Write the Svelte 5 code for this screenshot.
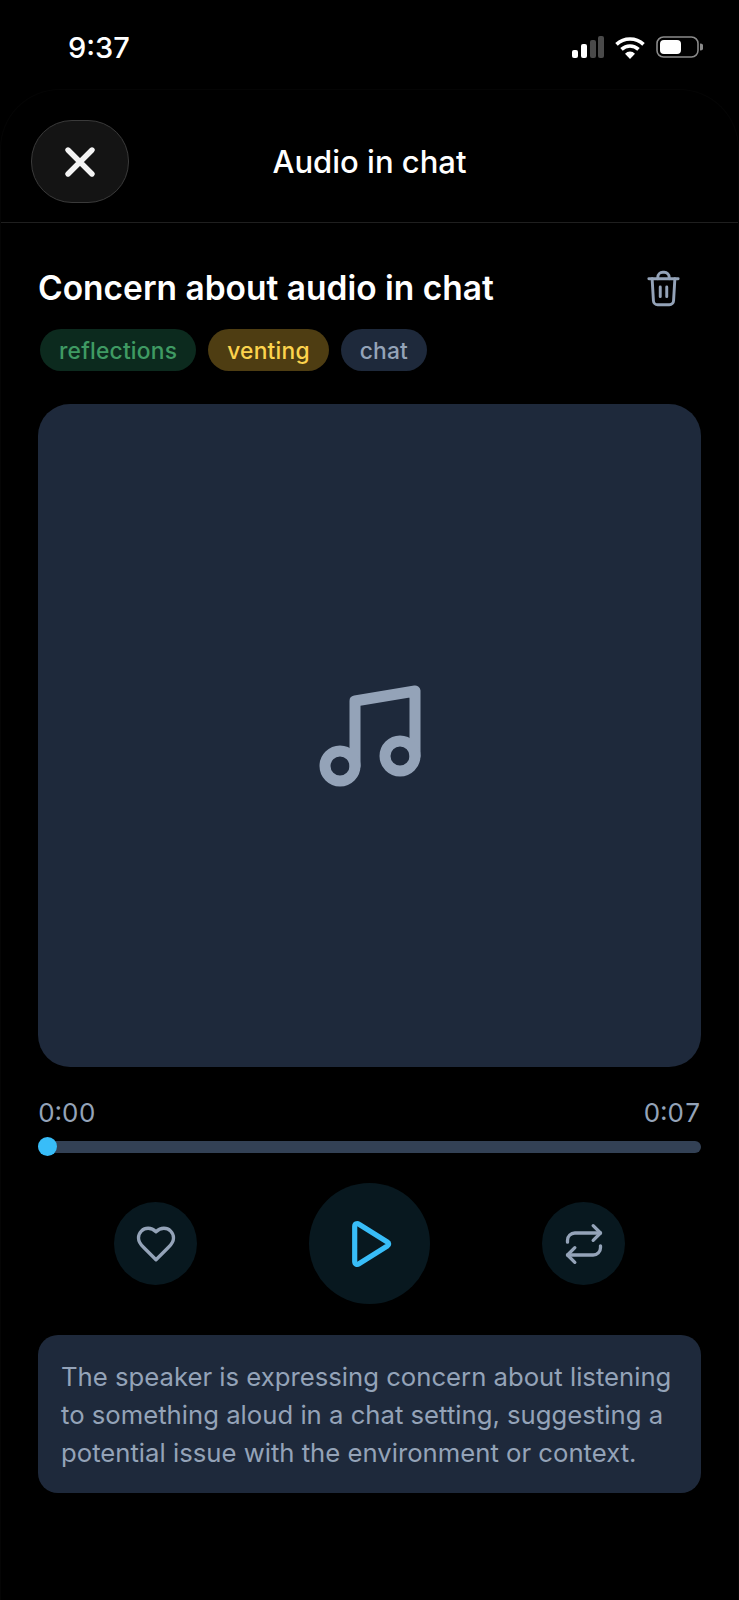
<script lang="ts">
  const tags = [
    { label: 'reflections', tone: 'green' },
    { label: 'venting', tone: 'yellow' },
    { label: 'chat', tone: 'slate' }
  ];
  const summary =
    'The speaker is expressing concern about listening to something aloud in a chat setting, suggesting a potential issue with the environment or context.';
</script>

<div class="screen">
  <div class="status">
    <span class="clock">9:37</span>
    <div class="status-icons">
      <svg width="32" height="22" viewBox="0 0 32 22" aria-hidden="true">
        <rect x="0" y="14" width="6" height="8" rx="2" fill="#fff" />
        <rect x="9" y="8" width="6" height="14" rx="2" fill="#fff" />
        <rect x="18" y="4" width="6" height="18" rx="2" fill="#4a4a4a" />
        <rect x="26" y="0" width="6" height="22" rx="2" fill="#4a4a4a" />
      </svg>
      <svg width="30" height="23" viewBox="0 0 30 23" aria-hidden="true" fill="none" stroke="#fff" stroke-width="3.6">
        <path d="M1.5 8.4a19.5 19.5 0 0 1 27 0" />
        <path d="M6.5 13.4a12.5 12.5 0 0 1 17 0" />
        <path d="M15 23l-5-5.300a7 7 0 0 1 10 0Z" fill="#fff" stroke="none" />
      </svg>
      <svg width="47" height="22" viewBox="0 0 47 22" aria-hidden="true">
        <rect x="1" y="1" width="41" height="20" rx="6.500" fill="none" stroke="#8a8a8a" stroke-width="1.600" />
        <rect x="4" y="4" width="21" height="14" rx="4" fill="#fff" />
        <path d="M44 7.500a3.500 3.500 0 0 1 0 7Z" fill="#8a8a8a" />
      </svg>
    </div>
  </div>

  <div class="sheet">
    <header class="topbar">
      <button class="close" aria-label="Close">
        <svg width="36" height="36" viewBox="0 0 36 36" fill="none" stroke="#f4f4f4" stroke-width="5.400" stroke-linecap="round">
          <path d="M6 6l24 24M30 6 6 30" />
        </svg>
      </button>
      <h1 class="topbar-title">Audio in chat</h1>
    </header>

    <main class="content">
      <div class="title-row">
        <h2 class="title">Concern about audio in chat</h2>
        <button class="trash" aria-label="Delete">
          <svg width="39" height="39" viewBox="0 0 24 24" fill="none" stroke="#94a3b8" stroke-width="1.800" stroke-linecap="round" stroke-linejoin="round">
            <path d="M3 6h18" />
            <path d="M19 6l-.8 13.500a2.600 2.600 0 0 1-2.600 2.500H8.400a2.600 2.600 0 0 1-2.600-2.500L5 6" />
            <path d="M8.500 6V5a3 3 0 0 1 3-3h1a3 3 0 0 1 3 3v1" />
            <path d="M10 11v6M14 11v6" />
          </svg>
        </button>
      </div>

      <div class="tags">
        {#each tags as tag}
          <span class="tag {tag.tone}">{tag.label}</span>
        {/each}
      </div>

      <div class="art">
        <svg width="120" height="120" viewBox="0 0 24 24" fill="none" stroke="#94a3b8" stroke-width="2.200" stroke-linecap="round" stroke-linejoin="round">
          <path d="M9 18V5l12-2v13" />
          <circle cx="6" cy="18" r="3" />
          <circle cx="18" cy="16" r="3" />
        </svg>
      </div>

      <div class="times">
        <span>0:00</span>
        <span>0:07</span>
      </div>
      <div class="track">
        <span class="thumb"></span>
      </div>

      <div class="controls">
        <button class="round small" aria-label="Like">
          <svg width="42" height="42" viewBox="0 0 24 24" fill="none" stroke="#94a3b8" stroke-width="1.900" stroke-linecap="round" stroke-linejoin="round">
            <path d="M19 14c1.490-1.460 3-3.210 3-5.500A5.500 5.500 0 0 0 16.500 3c-1.760 0-3 .5-4.500 2-1.500-1.500-2.740-2-4.500-2A5.500 5.500 0 0 0 2 8.500c0 2.300 1.500 4.050 3 5.500l7 7Z" />
          </svg>
        </button>
        <button class="round big" aria-label="Play">
          <svg width="54" height="54" viewBox="0 0 24 24" fill="none" stroke="#38bdf8" stroke-width="2.300" stroke-linecap="round" stroke-linejoin="round">
            <path d="M5.200 4.200c0-1.100 1-1.600 1.900-1L19.700 11.100c.8.500.8 1.300 0 1.800L7.100 20.800c-.9.600-1.900.1-1.900-1Z" />
          </svg>
        </button>
        <button class="round small" aria-label="Repeat">
          <svg width="44" height="44" viewBox="0 0 24 24" fill="none" stroke="#94a3b8" stroke-width="1.800" stroke-linecap="round" stroke-linejoin="round">
            <path d="m17 2 4 4-4 4" />
            <path d="M3 11v-1a4 4 0 0 1 4-4h14" />
            <path d="m7 22-4-4 4-4" />
            <path d="M21 13v1a4 4 0 0 1-4 4H3" />
          </svg>
        </button>
      </div>

      <p class="summary">{summary}</p>
    </main>
  </div>
</div>

<style>
  :global(body) {
    margin: 0;
    background: #000;
  }

  .screen {
    height: 1600px;
    overflow: hidden;
    background: #000;
    color: #fff;
    font-family: Inter, "Noto Sans", sans-serif;
  }

  button {
    display: flex;
    align-items: center;
    justify-content: center;
    padding: 0;
    border: none;
    background: none;
  }

  .status {
    display: flex;
    align-items: center;
    justify-content: space-between;
    height: 89px;
    padding: 5px 36px 0 68px;
    box-sizing: border-box;
  }

  .clock {
    font-size: 29px;
    font-weight: 500;
    line-height: 1;
  }

  .status-icons {
    display: flex;
    align-items: center;
    gap: 11px;
  }

  .sheet {
    height: 1511px;
    box-sizing: border-box;
    border: 1px solid #050505;
    border-bottom: none;
    border-radius: 60px 60px 0 0;
  }

  .topbar {
    position: relative;
    display: flex;
    align-items: center;
    justify-content: center;
    height: 133px;
    box-sizing: border-box;
    border-bottom: 1px solid #1f1f1f;
  }

  .close {
    position: absolute;
    left: 30px;
    top: 30px;
    width: 98px;
    height: 83px;
    box-sizing: border-box;
    border: 1.500px solid #3a3a3a;
    border-radius: 41px;
    background: #141414;
  }

  .topbar-title {
    margin: 0;
    padding-top: 10px;
    font-size: 31px;
    font-weight: 500;
  }

  .content {
    padding: 0 37px;
  }

  .title-row {
    display: flex;
    align-items: center;
    justify-content: space-between;
    height: 78px;
    margin-top: 26px;
    padding-right: 18px;
  }

  .title {
    margin: 0;
    font-size: 33.500px;
    font-weight: 600;
  }

  .tags {
    display: flex;
    gap: 12px;
    margin-top: 2px;
    padding-left: 2px;
  }

  .tag {
    height: 42px;
    padding: 0 19px;
    border-radius: 21px;
    font-size: 22.800px;
    font-weight: 500;
    letter-spacing: 0.2px;
    line-height: 44px;
  }

  .green {
    background: #0c2a1e;
    color: #3f9a63;
  }

  .yellow {
    background: #4e3d12;
    color: #fcd34d;
  }

  .slate {
    background: #1e293b;
    color: #94a3b8;
  }

  .art {
    display: flex;
    align-items: center;
    justify-content: center;
    height: 663px;
    margin-top: 33px;
    border-radius: 32px;
    background: #1e293b;
  }

  .times {
    display: flex;
    justify-content: space-between;
    margin-top: 31px;
    color: #94a3b8;
    font-size: 26px;
    font-variant-numeric: tabular-nums;
    line-height: 30px;
  }

  .track {
    position: relative;
    height: 12px;
    margin-top: 13px;
    border-radius: 6px;
    background: #334155;
  }

  .thumb {
    position: absolute;
    left: 0;
    top: -4px;
    width: 19px;
    height: 19px;
    border-radius: 50%;
    background: #38bdf8;
  }

  .controls {
    display: flex;
    align-items: center;
    justify-content: center;
    gap: 112px;
    margin-top: 30px;
  }

  .round {
    border-radius: 50%;
    background: #08181f;
  }

  .small {
    width: 83px;
    height: 83px;
  }

  .big {
    width: 121px;
    height: 121px;
  }

  .summary {
    margin: 31px 0 0;
    padding: 23px 12px 21px 23px;
    border-radius: 20px;
    background: #1e293b;
    color: #94a3b8;
    font-size: 25.700px;
    line-height: 38px;
  }
</style>
